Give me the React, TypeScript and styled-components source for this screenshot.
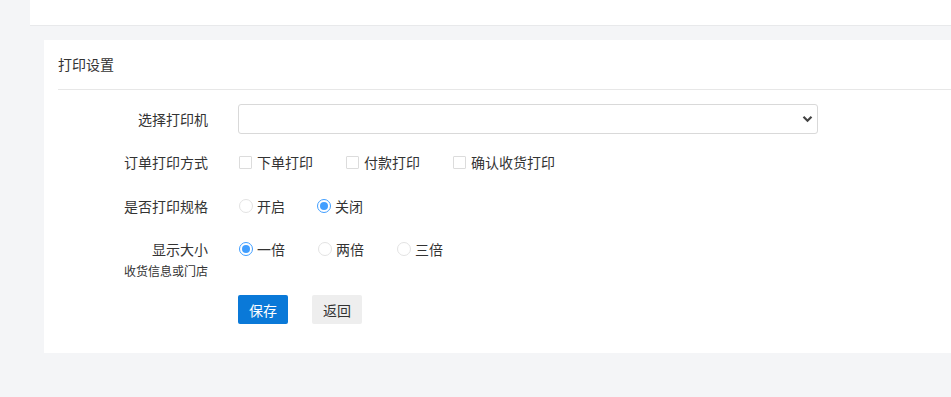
import { useState } from 'react'
import styled, { createGlobalStyle } from 'styled-components'

const GlobalStyle = createGlobalStyle`
  html, body {
    margin: 0;
    padding: 0;
    background: #f4f5f7;
    font-family: "Noto Sans CJK SC", "Noto Sans", sans-serif;
    color: #333;
  }
  * { box-sizing: border-box; }
`;

const Page = styled.div`
  width: 951px;
  min-height: 397px;
  overflow: hidden;
`;

const TopPanel = styled.div`
  margin-left: 30px;
  height: 26px;
  background: #fff;
  border-bottom: 1px solid #e8e9eb;
`;

const Card = styled.div`
  margin: 14px 0 0 44px;
  background: #fff;
  padding-bottom: 29px;
`;

const CardHeader = styled.div`
  margin-left: 14px;
  height: 50px;
  line-height: 49px;
  font-size: 14px;
  color: #333;
  border-bottom: 1px solid #e7e7e7;
`;

const FormBody = styled.div`
  padding-top: 14px;
  display: flex;
  flex-direction: column;
`;

const Row = styled.div<{ $gap?: number }>`
  display: flex;
  align-items: flex-start;
  gap: 30px;
  margin-bottom: ${p => p.$gap ?? 0}px;
`;

const Label = styled.div<{ $h?: number }>`
  width: 164px;
  flex-shrink: 0;
  text-align: right;
  font-size: 14px;
  line-height: ${p => p.$h ?? 28}px;
  color: #333;
`;

const SubLabel = styled.div`
  font-size: 12px;
  line-height: 16px;
  color: #333;
`;

const Controls = styled.div`
  display: flex;
  align-items: center;
  height: 28px;
`;

const SelectWrap = styled.div`
  position: relative;
  width: 580px;
  height: 30px;
`;

const Select = styled.select`
  appearance: none;
  width: 100%;
  height: 30px;
  border: 1px solid #d9d9d9;
  border-radius: 3px;
  background: #fff;
  font-family: inherit;
  font-size: 14px;
  padding: 0 30px 0 8px;
  outline: none;
`;

const Chevron = styled.svg`
  position: absolute;
  right: 5px;
  top: 11px;
  width: 11px;
  height: 8px;
  pointer-events: none;
`;

const Option = styled.label<{ $space?: number }>`
  display: flex;
  align-items: center;
  margin-right: ${p => p.$space ?? 32}px;
  font-size: 14px;
  color: #333;
  cursor: pointer;
`;

const Box = styled.span`
  width: 13px;
  height: 13px;
  border: 1px solid #dcdcdc;
  border-radius: 1px;
  margin: 0 5px 0 1px;
  background: #fff;
`;

const Radio = styled.span<{ $on?: boolean }>`
  width: 14px;
  height: 14px;
  border-radius: 50%;
  border: 1px solid ${p => (p.$on ? '#409eff' : '#e3e3e3')};
  margin: 0 4px 0 1px;
  display: flex;
  align-items: center;
  justify-content: center;
  &::after {
    content: '';
    width: 8px;
    height: 8px;
    border-radius: 50%;
    background: ${p => (p.$on ? '#409eff' : 'transparent')};
  }
`;

const Button = styled.button<{ $primary?: boolean }>`
  width: 50px;
  height: 29px;
  border: none;
  border-radius: 2px;
  font-family: inherit;
  font-size: 14px;
  margin-right: 24px;
  background: ${p => (p.$primary ? '#0a79d8' : '#eeeeee')};
  color: ${p => (p.$primary ? '#fff' : '#333')};
  cursor: pointer;
`;

const App = () => {
    const [spec, setSpec] = useState('off')
    const [size, setSize] = useState('1')

    return (
        <Page>
            <GlobalStyle />
            <TopPanel />
            <Card>
                <CardHeader>打印设置</CardHeader>
                <FormBody>
                    <Row $gap={14}>
                        <Label $h={30}>选择打印机</Label>
                        <SelectWrap>
                            <Select defaultValue="">
                                <option value=""></option>
                            </Select>
                            <Chevron viewBox="0 0 11 8">
                                <path d="M1.5 1.8 L5.5 5.8 L9.5 1.8" fill="none" stroke="#444" strokeWidth="2.2" />
                            </Chevron>
                        </SelectWrap>
                    </Row>
                    <Row $gap={16}>
                        <Label>订单打印方式</Label>
                        <Controls>
                            {['下单打印', '付款打印', '确认收货打印'].map(t => (
                                <Option key={t}><Box />{t}</Option>
                            ))}
                        </Controls>
                    </Row>
                    <Row $gap={15}>
                        <Label>是否打印规格</Label>
                        <Controls>
                            <Option $space={31} onClick={() => setSpec('on')}><Radio $on={spec === 'on'} />开启</Option>
                            <Option onClick={() => setSpec('off')}><Radio $on={spec === 'off'} />关闭</Option>
                        </Controls>
                    </Row>
                    <Row $gap={16}>
                        <Label>
                            显示大小
                            <SubLabel>收货信息或门店</SubLabel>
                        </Label>
                        <Controls>
                            {[['1', '一倍'], ['2', '两倍'], ['3', '三倍']].map(([v, t]) => (
                                <Option key={v} $space={32} onClick={() => setSize(v)}>
                                    <Radio $on={size === v} />{t}
                                </Option>
                            ))}
                        </Controls>
                    </Row>
                    <Row>
                        <Label />
                        <Controls style={{ height: 29 }}>
                            <Button $primary>保存</Button>
                            <Button>返回</Button>
                        </Controls>
                    </Row>
                </FormBody>
            </Card>
        </Page>
    )
}

export default App
